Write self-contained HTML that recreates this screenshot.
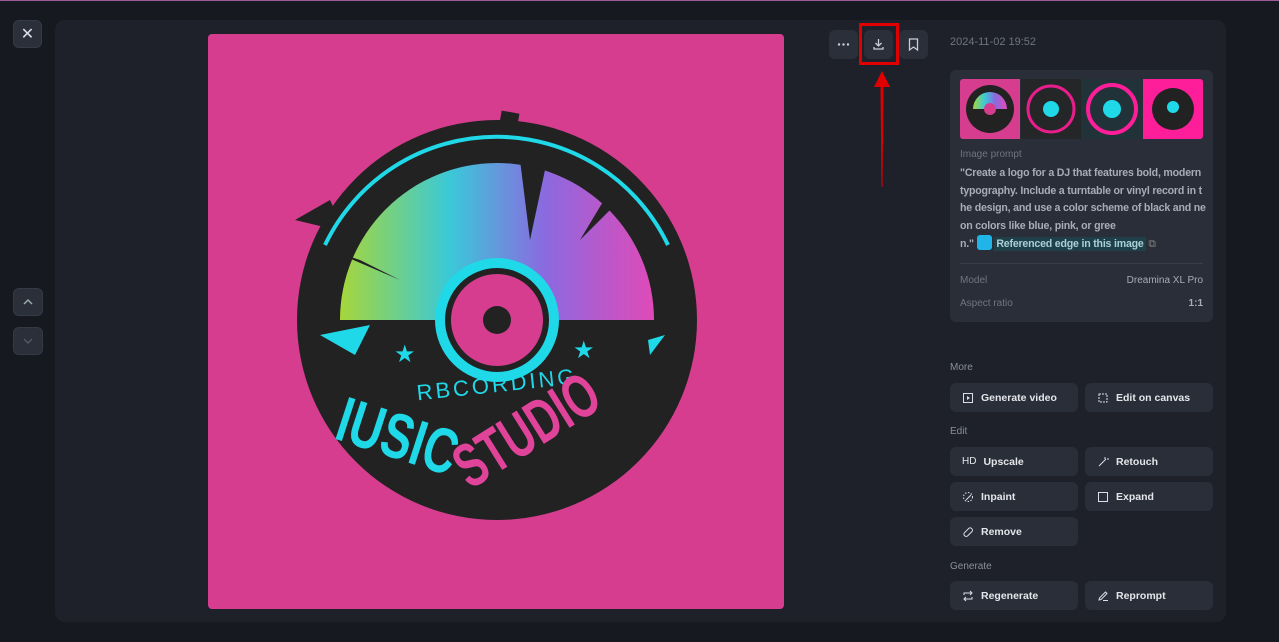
<!DOCTYPE html>
<html><head><meta charset="utf-8"><style>
*{box-sizing:border-box;margin:0;padding:0}
body{width:1279px;height:642px;overflow:hidden;background:#16191f;font-family:"Liberation Sans",sans-serif;position:relative}
.topline{position:absolute;left:0;top:0;width:1279px;height:1px;background:#a05a9a}
.panel{position:absolute;left:55px;top:20px;width:1171px;height:602px;background:#1e212a;border-radius:10px}
.sq{position:absolute;background:#2b2f39;border:1px solid #363a45;border-radius:6px;display:flex;align-items:center;justify-content:center;color:#dde;font-size:14px}
.img{position:absolute;left:208px;top:34px;width:576px;height:575px;background:#d63d8f;border-radius:4px;overflow:hidden}
.ib{position:absolute;top:30px;width:29px;height:29px;background:#2b2f39;border-radius:6px}
.date{position:absolute;left:950px;top:36px;font-size:11px;color:#6f7480}
.card{position:absolute;left:950px;top:70px;width:263px;height:252px;background:#2a2e38;border-radius:6px}
.th{position:absolute;top:9px;width:60px;height:60px}
.lbl{font-size:10px;color:#6f7480}
.prompt{position:absolute;left:10px;top:95px;width:246px;font-size:10.6px;line-height:17.5px;color:#a8acb6;font-weight:bold;word-break:break-all;letter-spacing:-0.2px}
.sec{position:absolute;left:950px;font-size:10px;color:#8a8f99}
.btn{position:absolute;width:128px;height:29px;background:#2a2e38;border-radius:6px;font-size:10.5px;font-weight:bold;color:#e4e6ea;display:flex;align-items:center;padding-left:12px;gap:7px}
.btn svg{width:12px;height:12px}
</style></head><body>
<div class="topline"></div>
<div class="panel"></div>
<div class="sq" style="left:13px;top:20px;width:29px;height:28px;font-size:16px">✕</div>
<div class="sq" style="left:13px;top:288px;width:30px;height:28px"><svg width="12" height="8" viewBox="0 0 12 8"><path d="M2 6L6 2L10 6" stroke="#9aa" stroke-width="1.5" fill="none"/></svg></div>
<div class="sq" style="left:13px;top:327px;width:30px;height:28px"><svg width="12" height="8" viewBox="0 0 12 8"><path d="M2 2L6 6L10 2" stroke="#556" stroke-width="1.5" fill="none"/></svg></div>

<div class="img"><svg width="576" height="575" viewBox="208 34 576 575">
<defs><linearGradient id="rb" x1="0" x2="1"><stop offset="0" stop-color="#a6d63a"/><stop offset=".35" stop-color="#3ac9d8"/><stop offset=".65" stop-color="#8a6ae0"/><stop offset="1" stop-color="#e04ab8"/></linearGradient></defs>
<rect x="500" y="112" width="18" height="18" fill="#222" transform="rotate(10 509 121)"/>
<path d="M295 220L330 200L345 232Z" fill="#222"/>
<path d="M640 210L662 208L652 240Z" fill="#222"/>
<circle cx="497" cy="320" r="200" fill="#222"/>
<path d="M340 320A157 157 0 0 1 654 320Z" fill="url(#rb)"/>
<path d="M325 245A190 190 0 0 1 668 245" stroke="#1fd8e8" stroke-width="4" fill="none"/>
<path d="M520 160L530 240L545 170Z M330 250L400 280L360 260Z M610 190L580 240L620 200Z" fill="#222"/>
<circle cx="497" cy="320" r="62" fill="#1fd8e8"/>
<circle cx="497" cy="320" r="52" fill="#222"/>
<circle cx="497" cy="320" r="46" fill="#d63d8f"/>
<circle cx="497" cy="320" r="14" fill="#222"/>
<path d="M320 335L370 325L355 355Z" fill="#1fd8e8"/>
<path d="M648 340L665 335L650 355Z" fill="#1fd8e8"/>
<text x="394" y="362" fill="#1fd8e8" font-size="24">★</text>
<text x="573" y="358" fill="#1fd8e8" font-size="24">★</text>
<text x="497" y="392" text-anchor="middle" fill="#1fd8e8" font-size="22" letter-spacing="3" font-family="Liberation Sans" transform="rotate(-6 497 385)">RBCORDING</text>
<g transform="translate(345 400) rotate(18) scale(.72 1)"><text x="0" y="40" fill="#1fd8e8" font-size="64" font-weight="bold" font-family="Liberation Sans">IUSIC</text></g>
<g transform="translate(470 490) rotate(-32) scale(.68 1)"><text x="0" y="0" fill="#e0449a" font-size="62" font-weight="bold" font-family="Liberation Sans">STUDIO</text></g>
</svg></div>

<div class="ib" style="left:829px"><svg width="29" height="29"><circle cx="10" cy="14.5" r="1.2" fill="#ccd"/><circle cx="14.5" cy="14.5" r="1.2" fill="#ccd"/><circle cx="19" cy="14.5" r="1.2" fill="#ccd"/></svg></div>
<div class="ib" style="left:864px"><svg width="29" height="29"><path d="M14.5 9V16M11.5 13L14.5 16L17.5 13M10 17V19H19V17" stroke="#ccd" stroke-width="1.3" fill="none"/></svg></div>
<div class="ib" style="left:899px"><svg width="29" height="29"><path d="M10.5 9H18.5V20L14.5 17L10.5 20Z" stroke="#ccd" stroke-width="1.3" fill="none"/></svg></div>
<div style="position:absolute;left:859px;top:23px;width:40px;height:42px;border:3px solid #e00000"></div>
<svg style="position:absolute;left:870px;top:65px" width="24" height="125"><path d="M12 6L4 22H10.5L11.5 122H12.5L13.5 22H20Z" fill="#e00000"/></svg>

<div class="date">2024-11-02 19:52</div>
<div class="card">
 <div class="th" style="left:10px;background:#d63d8f;border-radius:3px 0 0 3px"><svg width="60" height="60"><circle cx="30" cy="30" r="24" fill="#222"/><path d="M13 30A17 17 0 0 1 47 30Z" fill="url(#rb)"/><circle cx="30" cy="30" r="6" fill="#d63d8f"/></svg></div>
 <div class="th" style="left:71px;background:#252628"><svg width="60" height="60"><circle cx="30" cy="30" r="23" fill="none" stroke="#e91e8c" stroke-width="3"/><circle cx="30" cy="30" r="8" fill="#1fd8e8"/></svg></div>
 <div class="th" style="left:132px;background:#213238"><svg width="60" height="60"><circle cx="30" cy="30" r="24" fill="none" stroke="#ff1e99" stroke-width="4"/><circle cx="30" cy="30" r="9" fill="#1fd8e8"/></svg></div>
 <div class="th" style="left:193px;background:#ff1e99;border-radius:0 3px 3px 0"><svg width="60" height="60"><circle cx="30" cy="30" r="21" fill="#222"/><circle cx="30" cy="28" r="6" fill="#1fd8e8"/></svg></div>
 <div class="lbl" style="position:absolute;left:10px;top:79px">Image prompt</div>
 <div class="prompt">"Create a logo for a DJ that features bold, modern typography. Include a turntable or vinyl record in the design, and use a color scheme of black and neon colors like blue, pink, or gree<br>n." <span style="display:inline-block;width:15px;height:15px;background:#1fb5e8;border-radius:3px;vertical-align:-3px"></span> <span style="background:#1f4048;color:#a8d0d8;padding:1px 2px">Referenced edge in this image</span> <span style="color:#888;font-weight:normal">⧉</span></div>
 <div style="position:absolute;left:10px;top:193px;width:243px;height:1px;background:#3a3e48"></div>
 <div class="lbl" style="position:absolute;left:10px;top:205px;color:#707580">Model</div>
 <div style="position:absolute;right:10px;top:205px;font-size:10px;color:#a8acb6">Dreamina XL Pro</div>
 <div class="lbl" style="position:absolute;left:10px;top:228px;color:#707580">Aspect ratio</div>
 <div style="position:absolute;right:10px;top:228px;font-size:10px;color:#a8acb6;font-weight:bold">1:1</div>
</div>

<div class="sec" style="top:362px">More</div>
<div class="btn" style="left:950px;top:383px"><svg viewBox="0 0 12 12"><rect x="1.5" y="1.5" width="9" height="9" stroke="#dde" fill="none"/><path d="M5 4L8 6L5 8Z" fill="#dde"/></svg>Generate video</div>
<div class="btn" style="left:1085px;top:383px"><svg viewBox="0 0 12 12"><rect x="2" y="2" width="8" height="8" stroke="#dde" fill="none" stroke-dasharray="2 1"/></svg>Edit on canvas</div>
<div class="sec" style="top:426px">Edit</div>
<div class="btn" style="left:950px;top:447px"><span style="font-weight:normal;font-size:10px">HD</span>Upscale</div>
<div class="btn" style="left:1085px;top:447px"><svg viewBox="0 0 12 12"><path d="M2 10L9 3M8 1V3M10 3H12" stroke="#dde" fill="none"/></svg>Retouch</div>
<div class="btn" style="left:950px;top:482px"><svg viewBox="0 0 12 12"><circle cx="6" cy="6" r="4.5" stroke="#dde" fill="none" stroke-dasharray="1.5 1.5"/><path d="M4 9L9 4" stroke="#dde"/></svg>Inpaint</div>
<div class="btn" style="left:1085px;top:482px"><svg viewBox="0 0 12 12"><rect x="1.5" y="1.5" width="9" height="9" stroke="#dde" fill="none"/></svg>Expand</div>
<div class="btn" style="left:950px;top:517px"><svg viewBox="0 0 12 12"><rect x="1" y="4" width="10" height="4.5" rx="2" stroke="#dde" fill="none" transform="rotate(-45 6 6)"/></svg>Remove</div>
<div class="sec" style="top:561px">Generate</div>
<div class="btn" style="left:950px;top:581px"><svg viewBox="0 0 12 12"><path d="M2 5V3H10M8 1L10 3L8 5M10 7V9H2M4 11L2 9L4 7" stroke="#dde" fill="none"/></svg>Regenerate</div>
<div class="btn" style="left:1085px;top:581px"><svg viewBox="0 0 12 12"><path d="M2 10L2.5 8L8.5 2L10 3.5L4 9.5ZM6 10.5H11" stroke="#dde" fill="none"/></svg>Reprompt</div>
</body></html>
